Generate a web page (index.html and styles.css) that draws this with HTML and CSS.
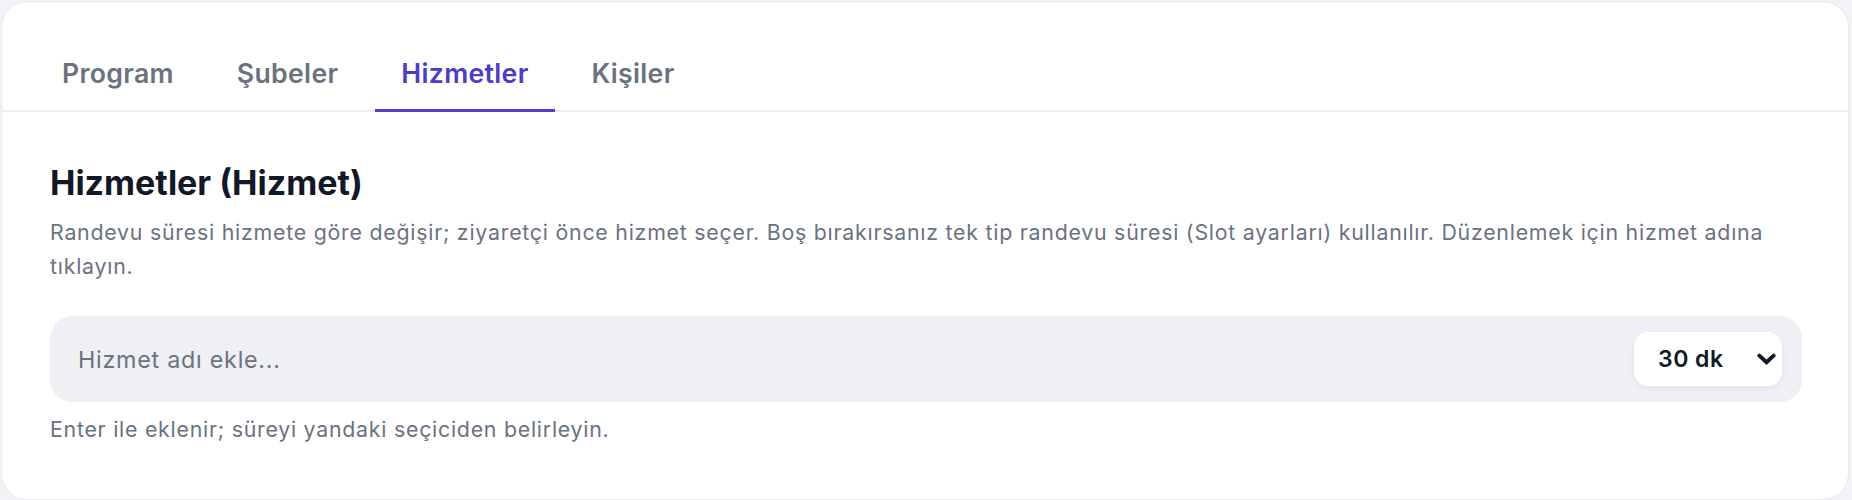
FILE: index.html
```html
<!DOCTYPE html>
<html lang="tr">
<head>
<meta charset="utf-8">
<title>Hizmetler</title>
<link rel="stylesheet" href="styles.css">
</head>
<body>
<div class="page">
  <section class="card">
    <nav class="tabs">
      <a class="tab">Program</a>
      <a class="tab">Şubeler</a>
      <a class="tab active">Hizmetler</a>
      <a class="tab">Kişiler</a>
    </nav>
    <div class="content">
      <h2 class="title">Hizmetler (Hizmet)</h2>
      <p class="desc">Randevu süresi hizmete göre değişir; ziyaretçi önce hizmet seçer. Boş bırakırsanız tek tip randevu süresi (Slot ayarları) kullanılır. Düzenlemek için hizmet adına tıklayın.</p>
      <div class="add-row">
        <input class="add-input" type="text" placeholder="Hizmet adı ekle...">
        <div class="duration">
          <span class="duration-value">30 dk</span>
          <svg class="chevron" width="19" height="12" viewBox="0 0 19 12" aria-hidden="true">
            <path d="M2.4 2.6 L9.5 9.2 L16.6 2.6" fill="none" stroke="#111827" stroke-width="4" stroke-linecap="round" stroke-linejoin="miter"/>
          </svg>
        </div>
      </div>
      <p class="hint">Enter ile eklenir; süreyi yandaki seçiciden belirleyin.</p>
    </div>
  </section>
</div>
</body>
</html>
```

FILE: styles.css
```css
html, body {
  margin: 0;
  padding: 0;
}

body {
  background: #f2f3f6;
  font-family: "Inter", "Noto Sans", "Liberation Sans", sans-serif;
  color: #111827;
}

.page {
  padding: 1px 3px 3px 1px;
}

.card {
  background: #ffffff;
  border: 1px solid #e7e8ec;
  border-radius: 26px;
  overflow: hidden;
}

.tabs {
  display: flex;
  gap: 11px;
  padding: 0 34px;
  border-bottom: 2px solid #eceef1;
}

.tab {
  padding: 55px 26px 20px;
  font-size: 26.67px;
  line-height: 32px;
  font-weight: 600;
  letter-spacing: 0.3px;
  color: #6b7280;
  border-bottom: 3px solid transparent;
  margin-bottom: -2px;
  cursor: pointer;
}

.tab.active {
  color: #4d3bcb;
  border-bottom-color: #5040cf;
}

.content {
  padding: 51px 46px 53px 48px;
}

.title {
  margin: 0;
  font-size: 34px;
  line-height: 40px;
  font-weight: 700;
  letter-spacing: 0;
  color: #111827;
}

.desc {
  margin: 12px 0 0;
  font-size: 21.33px;
  line-height: 34px;
  letter-spacing: 0.76px;
  color: #6b7280;
}

.add-row {
  margin-top: 33px;
  height: 86px;
  box-sizing: border-box;
  display: flex;
  align-items: center;
  gap: 16px;
  padding: 0 20px 0 28px;
  background: #eef0f4;
  border-radius: 22px;
}

.add-input {
  flex: 1;
  min-width: 0;
  border: 0;
  padding: 0;
  background: transparent;
  outline: none;
  font-family: inherit;
  font-size: 23.3px;
  letter-spacing: 0.75px;
  color: #111827;
}

.add-input::placeholder {
  color: #6b7280;
  opacity: 1;
}

.duration {
  width: 148px;
  height: 54px;
  box-sizing: border-box;
  display: flex;
  align-items: center;
  justify-content: space-between;
  padding: 0 6px 0 24px;
  background: #ffffff;
  border-radius: 14px;
  box-shadow: 0 2px 6px rgba(17, 24, 39, 0.06);
  font-size: 23px;
  font-weight: 600;
  letter-spacing: 0.5px;
  color: #111827;
}

.chevron {
  display: block;
}

.hint {
  margin: 10px 0 0;
  font-size: 21.33px;
  line-height: 34px;
  letter-spacing: 0.75px;
  color: #6b7280;
}
```
